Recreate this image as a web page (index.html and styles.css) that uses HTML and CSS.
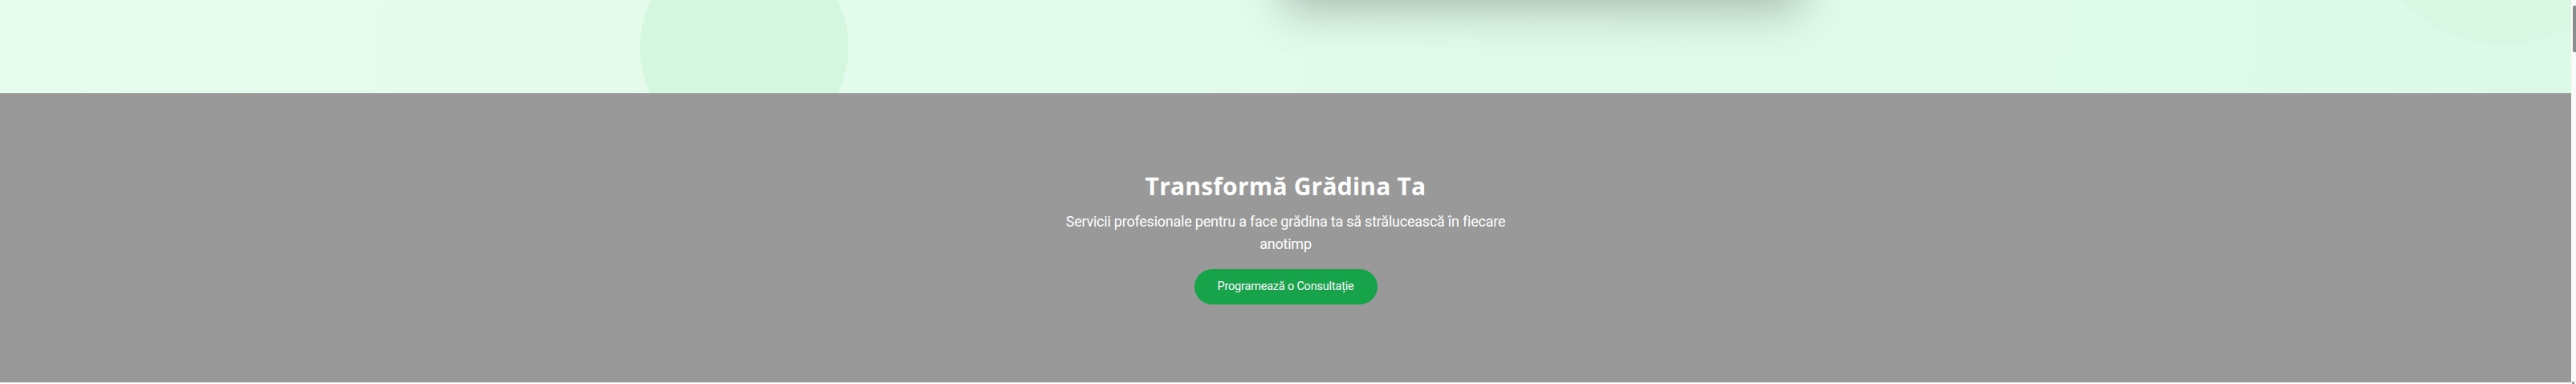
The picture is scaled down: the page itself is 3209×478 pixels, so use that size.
FILE: index.html
```html
<!DOCTYPE html>
<html lang="ro">
<head>
<meta charset="utf-8">
<title>Transformă Grădina Ta</title>
<link rel="stylesheet" href="styles.css">
</head>
<body>
  <div class="page">
    <section class="hero">
      <div class="hero-card"></div>
      <div class="hero-circle hero-circle-a"></div>
      <div class="hero-circle hero-circle-b"></div>
    </section>
    <section class="cta">
      <h2 class="cta-title">Transformă Grădina Ta</h2>
      <p class="cta-text">Servicii profesionale pentru a face grădina ta să strălucească în fiecare anotimp</p>
      <a class="cta-button" href="#">Programează o Consultație</a>
    </section>
    <div class="next"></div>
  </div>
  <div class="scrollbar">
    <div class="scrollbar-thumb"></div>
    <div class="scrollbar-end"></div>
  </div>
</body>
</html>
```

FILE: styles.css
```css
html, body {
  margin: 0;
  padding: 0;
  height: 478px;
  overflow: hidden;
  background: #ffffff;
}

body {
  display: flex;
  font-family: Roboto, "Noto Sans", sans-serif;
}

.page {
  flex: 1;
  min-width: 0;
  display: flex;
  flex-direction: column;
}

.hero {
  position: relative;
  overflow: hidden;
  height: 116px;
  flex: none;
  background: linear-gradient(95deg, #e7fcee 0%, #e2fbeb 45%, #dcf9e7 100%);
}

.hero-card {
  position: absolute;
  left: 1588px;
  top: -600px;
  width: 666px;
  height: 600px;
  background: #cfe8d8;
  box-shadow: 0 25px 50px -12px rgba(0, 0, 0, 0.25);
}

.hero-circle {
  position: absolute;
  border-radius: 50%;
}

.hero-circle-a {
  left: 797px;
  top: -71px;
  width: 260px;
  height: 260px;
  background: #d3f7df;
}

.hero-circle-b {
  left: 2947px;
  top: -285px;
  width: 340px;
  height: 340px;
  background: #d8f8e3;
}

.cta {
  flex: none;
  background: #999999;
  padding: 98px 16px 97px;
  text-align: center;
  color: #ffffff;
}

.cta-title {
  margin: 0 0 12px;
  font-family: "Open Sans", "Noto Sans", sans-serif;
  font-weight: 700;
  font-size: 30px;
  line-height: 36px;
  letter-spacing: 0.2px;
}

.cta-text {
  max-width: 576px;
  margin: 0 auto 17px;
  font-family: Roboto, "Noto Sans", sans-serif;
  font-size: 18px;
  line-height: 28px;
  letter-spacing: -0.23px;
}

.cta-button {
  display: inline-block;
  background: #16a34a;
  color: #ffffff;
  font-family: Roboto, "Noto Sans", sans-serif;
  font-size: 14.5px;
  line-height: 20px;
  letter-spacing: -0.2px;
  padding: 12px 29px;
  border-radius: 9999px;
  text-decoration: none;
}

.next {
  flex: 1;
  background: #ffffff;
}

.scrollbar {
  width: 6px;
  flex: none;
  background: #fafafa;
  display: flex;
  flex-direction: column;
}

.scrollbar-thumb {
  margin: 7px 0 0 2px;
  height: 58px;
  background: #8c8c8c;
  border-radius: 2px 0 0 2px;
}

.scrollbar-end {
  margin: auto 0 0 1px;
  width: 3px;
  height: 3px;
  background: #9a9a9a;
}
```
